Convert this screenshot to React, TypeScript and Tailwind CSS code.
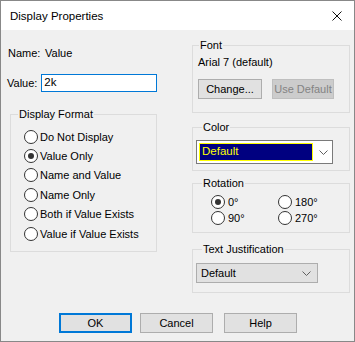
import React from "react"

type RadioProps = {
  label: string
  checked?: boolean
  className?: string
}

function Radio({ label, checked = false, className = "" }: RadioProps) {
  return (
    <div className={`flex items-center gap-[2px] ${className}`}>
      <span className="flex h-[14px] w-[14px] shrink-0 items-center justify-center rounded-full border border-[#333333] bg-white">
        {checked ? (
          <span className="h-[6px] w-[6px] rounded-full bg-[#333333]" />
        ) : null}
      </span>
      <span className="leading-[14px]">{label}</span>
    </div>
  )
}

function Chevron() {
  return (
    <svg width="9" height="5" viewBox="0 0 9 5" className="shrink-0">
      <path d="M0.5 0.5 L4.5 4.5 L8.5 0.5" fill="none" stroke="#606060" strokeWidth="1" />
    </svg>
  )
}

type GroupProps = {
  label: string
  labelOffset: string
  className: string
  children: React.ReactNode
}

function Group({ label, labelOffset, className, children }: GroupProps) {
  return (
    <fieldset className={`border border-[#dcdcdc] ${className}`}>
      <legend className={`px-[1px] leading-[14px] ${labelOffset}`}>{label}</legend>
      {children}
    </fieldset>
  )
}

export default function App() {
  return (
    <div className="h-[342px] w-[355px] overflow-hidden border border-[#888888] bg-[#f0f0f0] font-['Liberation_Sans',Arial,sans-serif] text-[11px] text-black">
      {/* title bar */}
      <div className="flex h-[29px] items-center justify-between bg-white pl-[9px] pr-[12px]">
        <span className="text-[11.5px] leading-[14px]">Display Properties</span>
        <svg width="10" height="10" viewBox="0 0 10 10">
          <path d="M0.5 0.5 L9.5 9.5 M9.5 0.5 L0.5 9.5" stroke="#111111" strokeWidth="1" />
        </svg>
      </div>

      <div className="flex items-start pl-[6px]">
        {/* left column */}
        <div className="flex w-[150px] flex-col pt-[16px]">
          <div className="flex h-[14px] items-center leading-[14px]">
            <span className="w-[38px] pl-[1px]">Name:</span>
            <span>Value</span>
          </div>
          <div className="mt-[14px] flex h-[18px] items-center">
            <span className="w-[38px]">Value:</span>
            <div className="flex h-[18px] w-[128px] items-center border border-[#0078d7] bg-white pl-[2px] text-[11.5px]">
              2k
            </div>
          </div>
          <Group
            label="Display Format"
            labelOffset="ml-[7px]"
            className="ml-[3px] mt-[15px] h-[145px] w-[147px]"
          >
            <div className="flex flex-col pl-[13px] pt-[6px]">
              {[
                ["Do Not Display", false],
                ["Value Only", true],
                ["Name and Value", false],
                ["Name Only", false],
                ["Both if Value Exists", false],
                ["Value if Value Exists", false],
              ].map(([label, checked]) => (
                <Radio
                  key={label as string}
                  label={label as string}
                  checked={checked as boolean}
                  className="h-[19.4px]"
                />
              ))}
            </div>
          </Group>
        </div>

        {/* right column */}
        <div className="ml-[35px] flex w-[158px] flex-col pt-[8px]">
          <Group label="Font" labelOffset="ml-[6px]" className="h-[75px]">
            <div className="flex flex-col pl-[5px] pt-[3px]">
              <span className="leading-[14px]">Arial 7 (default)</span>
              <div className="mt-[10px] flex gap-[10px]">
                <div className="flex h-[20px] w-[64px] items-center justify-center border border-[#adadad] bg-[#e1e1e1]">
                  Change...
                </div>
                <div className="flex h-[20px] w-[62px] items-center justify-center border border-[#bfbfbf] bg-[#cccccc] text-[#838383]">
                  Use Default
                </div>
              </div>
            </div>
          </Group>

          <Group label="Color" labelOffset="ml-[9px]" className="mt-[7px] h-[51px]">
            <div className="pl-[3px] pt-[6px]">
              <div className="flex h-[24px] w-[137px] items-center border border-[#7a7a7a] bg-white pl-[2px] pr-[4px]">
                <div className="flex h-[18px] w-[114px] items-center border border-[#ffff00] bg-[#000080] pl-[2px] text-[11.5px] text-[#ffff00]">
                  Default
                </div>
                <div className="flex flex-1 justify-end">
                  <Chevron />
                </div>
              </div>
            </div>
          </Group>

          <Group label="Rotation" labelOffset="ml-[9px]" className="mt-[5px] h-[57px]">
            <div className="grid grid-cols-[67px_1fr] pl-[18px] pt-[4px]">
              <Radio label="0°" checked className="h-[16px] gap-[3px]" />
              <Radio label="180°" className="h-[16px] gap-[3px]" />
              <Radio label="90°" className="h-[16px] gap-[3px]" />
              <Radio label="270°" className="h-[16px] gap-[3px]" />
            </div>
          </Group>

          <Group
            label="Text Justification"
            labelOffset="ml-[9px]"
            className="mt-[9px] h-[51px]"
          >
            <div className="pl-[3px] pt-[7px]">
              <div className="flex h-[20px] w-[122px] items-center justify-between border border-[#adadad] bg-[#e1e1e1] pl-[4px] pr-[6px]">
                <span>Default</span>
                <Chevron />
              </div>
            </div>
          </Group>
        </div>
      </div>

      {/* buttons */}
      <div className="ml-[58px] mt-[20px] flex">
        <div className="flex h-[20px] w-[73px] items-center justify-center border-2 border-[#0078d7] bg-[#e1e1e1]">
          OK
        </div>
        <div className="ml-[8px] flex h-[20px] w-[73px] items-center justify-center border border-[#adadad] bg-[#e1e1e1]">
          Cancel
        </div>
        <div className="ml-[11px] flex h-[20px] w-[73px] items-center justify-center border border-[#adadad] bg-[#e1e1e1]">
          Help
        </div>
      </div>
    </div>
  )
}
